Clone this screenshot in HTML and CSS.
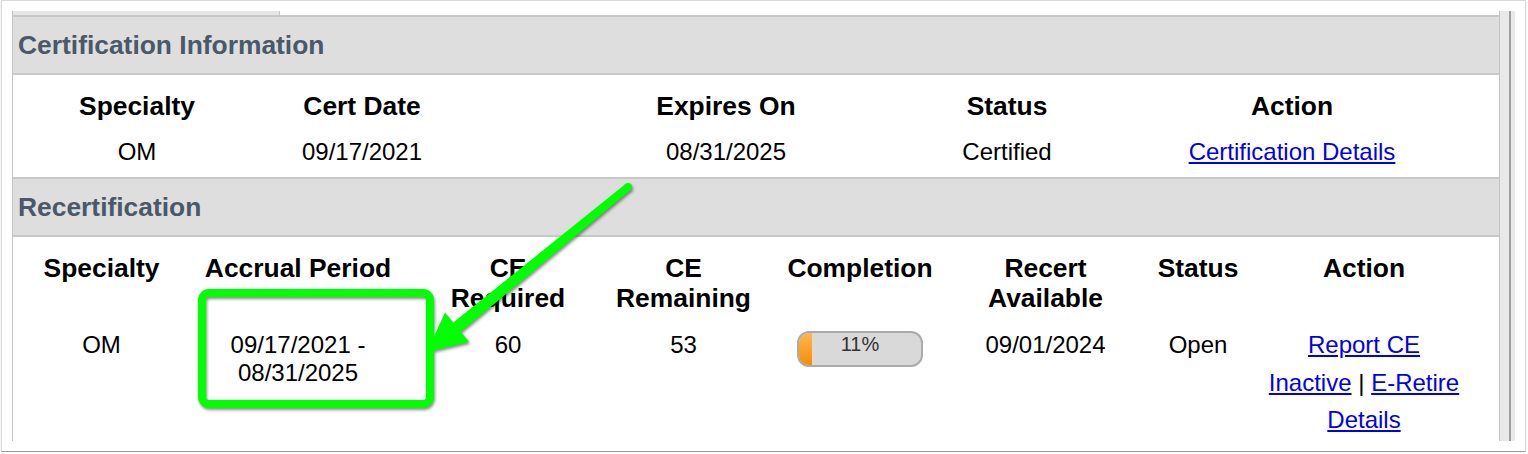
FILE: index.html
```html
<!DOCTYPE html>
<html lang="en">
<head>
  <meta charset="UTF-8">
  <meta name="viewport" content="width=device-width, initial-scale=1.0">
  <title>Certification</title>
  <link rel="stylesheet" href="styles.css">
</head>
<body>
  <div class="shot">
    <div class="page">
      <div class="main">
        <div class="tabs"><div class="tab"></div></div>

        <!-- Certification -->
        <h2 class="section-title">Certification Information</h2>
        <div class="grid cert">
          <div class="th">Specialty</div>
          <div class="th">Cert Date</div>
          <div class="th">Expires On</div>
          <div class="th">Status</div>
          <div class="th">Action</div>

          <div class="td">OM</div>
          <div class="td">09/17/2021</div>
          <div class="td">08/31/2025</div>
          <div class="td">Certified</div>
          <div class="td"><a href="#">Certification Details</a></div>
        </div>

        <!-- Recertification -->
        <h2 class="section-title">Recertification</h2>
        <div class="grid recert">
          <div class="th">Specialty</div>
          <div class="th">Accrual Period</div>
          <div class="th">CE<br>Required</div>
          <div class="th">CE<br>Remaining</div>
          <div class="th">Completion</div>
          <div class="th">Recert<br>Available</div>
          <div class="th">Status</div>
          <div class="th">Action</div>

          <div class="td">OM</div>
          <div class="td">09/17/2021 -<br>08/31/2025</div>
          <div class="td">60</div>
          <div class="td">53</div>
          <div class="td">
            <div class="progress">
              <div class="progress-fill" style="width: 11%"></div>
              <span class="progress-label">11%</span>
            </div>
          </div>
          <div class="td">09/01/2024</div>
          <div class="td">Open</div>
          <div class="td actions">
            <div><a href="#">Report CE</a></div>
            <div><a href="#">Inactive</a> | <a href="#">E-Retire</a></div>
            <div><a href="#">Details</a></div>
          </div>
        </div>
      </div>
      <div class="scroll"></div>
    </div>
  </div>

  <!-- marcação verde por cima da captura -->
  <svg class="annotation" width="1528" height="454" viewBox="0 0 1528 454">
    <g class="mark">
      <rect x="202" y="293" width="228" height="111" rx="7" ry="7" fill="none" stroke="#00ff00" stroke-width="8"/>
      <circle cx="628" cy="187" r="4" fill="#00ff00"/>
      <polygon points="630.5,190.1 625.5,183.9 453.3,322.6 460.9,331.8" fill="#00ff00"/>
      <polygon points="427,352 445,312.5 469.2,341.9" fill="#00ff00"/>
    </g>
  </svg>
</body>
</html>
```

FILE: styles.css
```css
/* Base */
body {
  margin: 0;
  background-color: #ffffff;
  font-family: "Liberation Sans", Arial, sans-serif;
  color: #000000;
  position: relative;
}

.shot {
  box-sizing: border-box;
  width: 1525px;
  height: 452px;
  margin-left: 1px;
  border: 1px solid #dadada;
  border-bottom-color: #9c9c9c;
  box-shadow: 0 1px 1px rgba(0, 0, 0, 0.25);
  background-color: #ffffff;
}

.page {
  display: flex;
  margin: 10px 0 0 10px;
  height: 430px;
  overflow: hidden;
}

.main {
  flex: 0 0 1488px;
  box-sizing: border-box;
  border-left: 1px solid #c4c4c4;
  border-right: 1px solid #c4c4c4;
}

.scroll {
  width: 15px;
  background: linear-gradient(to right, #e8e8e8 9px, #9e9e9e 9px, #9e9e9e 11px, #e8e8e8 11px);
}

/* Tab stub on top */
.tabs {
  height: 4px;
}

.tab {
  width: 266px;
  height: 4px;
  background-color: #e6e6e6;
  border-right: 1px solid #c8c8c8;
}

/* Section bars */
.section-title {
  margin: 0;
  height: 56px;
  line-height: 56px;
  padding-left: 5px;
  background-color: #dedede;
  border-top: 2px solid #c8c8c8;
  border-bottom: 2px solid #c8c8c8;
  font-size: 26.4px;
  font-weight: bold;
  color: #4a5868;
}

/* Tables */
.grid {
  display: grid;
  align-items: start;
}

.cert {
  grid-template-columns: 128px 322px 406px 156px 1fr;
  row-gap: 17px;
  padding: 16px 0 11px 60px;
}

.recert {
  grid-template-columns: 99px 294px 126px 225px 128px 243px 62px 1fr;
  row-gap: 18px;
  padding: 16px 0 0 39px;
}

.th,
.td {
  display: flex;
  flex-direction: column;
  align-items: center;
  text-align: center;
  white-space: nowrap;
}

.th {
  font-size: 26.4px;
  font-weight: bold;
  line-height: 30px;
}

.td {
  font-size: 24px;
  line-height: 28px;
}

a {
  color: #0000ee;
  text-decoration: underline;
}

.actions {
  gap: 9.5px;
}

/* Progress */
.progress {
  position: relative;
  box-sizing: border-box;
  width: 126px;
  height: 36px;
  border: 2px solid #ababab;
  border-radius: 12px;
  background-color: #d9d9d9;
  overflow: hidden;
}

.progress-fill {
  position: absolute;
  top: 0;
  left: 0;
  bottom: 0;
  background: linear-gradient(to bottom, #fdb654, #f78f00);
}

.progress-label {
  position: relative;
  display: block;
  font-size: 20px;
  line-height: 22px;
  color: #333333;
}

/* Annotation overlay */
.annotation {
  position: absolute;
  top: 0;
  left: 0;
  pointer-events: none;
}

.mark {
  filter: drop-shadow(1px 2px 1.5px rgba(0, 0, 0, 0.45));
}
```
